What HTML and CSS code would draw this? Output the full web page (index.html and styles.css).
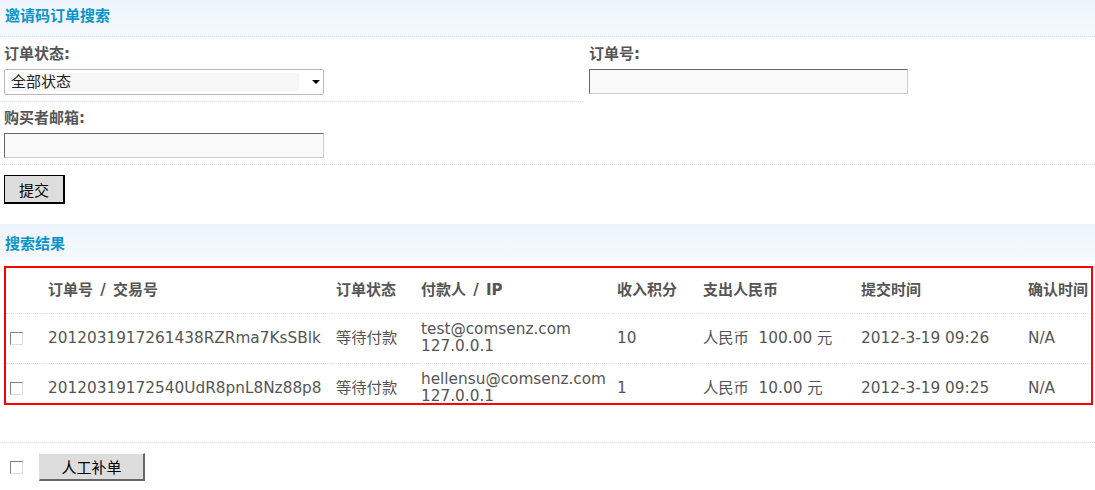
FILE: index.html
```html
<!DOCTYPE html>
<html lang="zh-CN">
<head>
  <meta charset="UTF-8" />
  <title>邀请码订单搜索</title>
  <link rel="stylesheet" href="styles.css">
</head>
<body>
  <div class="hd">邀请码订单搜索</div>

  <div class="form-row">
    <div class="cell cell-left">
      <div class="label">订单状态:</div>
      <div class="select">
        <span class="select-value">全部状态</span>
        <svg class="select-arrow" width="8" height="4" viewBox="0 0 8 4"><path d="M0 0h8L4 4z" fill="#000"/></svg>
      </div>
    </div>
    <div class="cell cell-right">
      <div class="label">订单号:</div>
      <div class="input wide"></div>
    </div>
  </div>

  <div class="form-row full">
    <div class="cell">
      <div class="label">购买者邮箱:</div>
      <div class="input"></div>
    </div>
  </div>

  <div class="submit-row">
    <button class="btn-submit">提交</button>
  </div>

  <div class="hd hd-result">搜索结果</div>

  <div class="result-box">
    <table class="result">
      <colgroup>
        <col style="width:38px">
        <col style="width:288px">
        <col style="width:85px">
        <col style="width:196px">
        <col style="width:86px">
        <col style="width:158px">
        <col style="width:167px">
        <col style="width:110px">
      </colgroup>
      <tr class="head">
        <th></th>
        <th>订单号 <span class="slash">/</span> 交易号</th>
        <th>订单状态</th>
        <th>付款人 <span class="slash">/</span> IP</th>
        <th>收入积分</th>
        <th>支出人民币</th>
        <th>提交时间</th>
        <th>确认时间</th>
      </tr>
      <tr>
        <td><span class="checkbox"></span></td>
        <td>2012031917261438RZRma7KsSBlk</td>
        <td>等待付款</td>
        <td>test@comsenz.com<br>127.0.0.1</td>
        <td>10</td>
        <td>人民币&nbsp; 100.00 元</td>
        <td>2012-3-19 09:26</td>
        <td>N/A</td>
      </tr>
      <tr>
        <td><span class="checkbox"></span></td>
        <td>20120319172540UdR8pnL8Nz88p8</td>
        <td>等待付款</td>
        <td>hellensu@comsenz.com<br>127.0.0.1</td>
        <td>1</td>
        <td>人民币&nbsp; 10.00 元</td>
        <td>2012-3-19 09:25</td>
        <td>N/A</td>
      </tr>
    </table>
  </div>

  <div class="footer-row">
    <span class="checkbox"></span>
    <button class="btn-manual">人工补单</button>
  </div>
</body>
</html>
```

FILE: styles.css
```css
* {
  box-sizing: border-box;
}

body {
  margin: 0;
  font-family: "DejaVu Sans", "Noto Sans CJK SC", sans-serif;
  font-size: 15px;
  color: #555;
  background: #fff;
}

.hd {
  height: 37px;
  padding: 7px 0 0 5px;
  font-weight: bold;
  font-size: 15px;
  line-height: 18px;
  color: #0b94c9;
  background: linear-gradient(#edf4fc, #f5f9fd);
  border-bottom: 1px dotted #d4e4f1;
}

.form-row {
  display: flex;
}

.cell {
  padding: 8px 0 6px 4px;
}

.cell-left {
  width: 583px;
  border-bottom: 1px dotted #d4e4f1;
}

.cell-right {
  padding-left: 6px;
}

.form-row.full {
  border-bottom: 1px dotted #d4e4f1;
}

.form-row.full .cell {
  padding-top: 7px;
}

.label {
  font-weight: bold;
  line-height: 18px;
  height: 18px;
  margin-bottom: 6px;
}

.select {
  width: 320px;
  height: 26px;
  border: 1px solid #b9b9b9;
  border-radius: 2px;
  display: flex;
  align-items: center;
  padding-left: 3px;
  background: #fff;
}

.select-value {
  width: 291px;
  height: 18px;
  line-height: 18px;
  padding-left: 3px;
  background: #f7f7f7;
  color: #222;
  font-size: 15px;
}

.select-arrow {
  margin-left: 13px;
}

.input {
  width: 320px;
  height: 25px;
  margin-top: 1px;
  background: #f9f9f9;
  border: 1px solid;
  border-color: #666 #ccc #ccc #666;
}

.input.wide {
  width: 319px;
}

.submit-row {
  height: 59px;
  padding: 10px 0 0 4px;
}

.btn-submit {
  display: block;
  width: 61px;
  height: 29px;
  padding: 0;
  font-family: "Noto Sans CJK SC", sans-serif;
  font-size: 15px;
  color: #000;
  background: #ddd;
  border: 1px solid #000;
  border-right-width: 2px;
  border-bottom-width: 2px;
}

.hd-result {
  height: 37px;
  padding-top: 11px;
  border-bottom: none;
}

.result-box {
  margin: 5px 2px 0 4px;
  height: 139px;
  border: 2px solid #f00;
  overflow: hidden;
}

.result {
  width: 1128px;
  table-layout: fixed;
  border-collapse: collapse;
}

.result th,
.result td {
  padding: 0 0 0 4px;
  text-align: left;
  vertical-align: middle;
  white-space: nowrap;
  border-bottom: 1px dotted #d4e4f1;
  line-height: 17px;
}

.result th {
  height: 45px;
  font-weight: bold;
}

.result td {
  height: 50px;
  font-size: 15.3px;
}

.slash {
  padding: 0 2px;
}

.checkbox {
  display: inline-block;
  width: 13px;
  height: 13px;
  vertical-align: middle;
  border: 1px solid;
  border-color: #808080 #ddd #ddd #808080;
  background: #fff;
}

.footer-row {
  margin-top: 37px;
  border-top: 1px dotted #d4e4f1;
  display: flex;
  align-items: center;
  gap: 16px;
  padding: 10px 0 0 10px;
}

.btn-manual {
  width: 106px;
  height: 28px;
  padding: 0;
  font-family: "Noto Sans CJK SC", sans-serif;
  font-size: 15px;
  color: #000;
  background: #ddd;
  border: 1px solid;
  border-color: #fff #666 #666 #ddd;
  border-bottom-width: 2px;
  border-right-width: 2px;
}
```
